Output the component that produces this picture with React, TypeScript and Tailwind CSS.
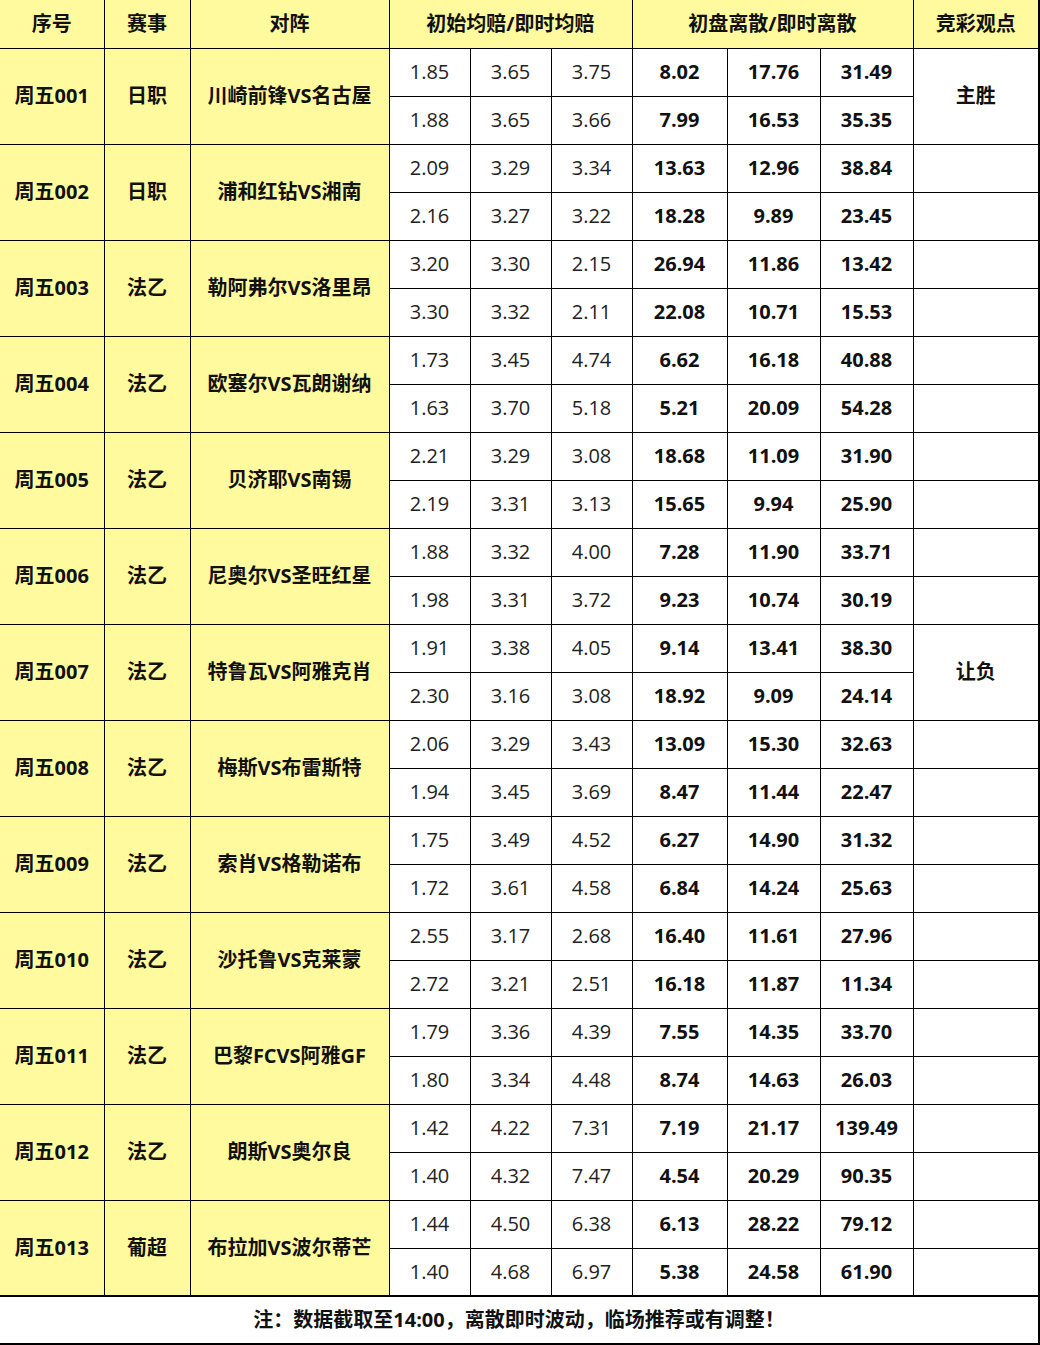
import React from 'react';

type Match = {
  no: string;
  league: string;
  teams: string;
  odds: [string[], string[]];
  disp: [string[], string[]];
  view?: string;
};

const matches: Match[] = [
  { no: '周五001', league: '日职', teams: '川崎前锋VS名古屋', odds: [['1.85', '3.65', '3.75'], ['1.88', '3.65', '3.66']], disp: [['8.02', '17.76', '31.49'], ['7.99', '16.53', '35.35']], view: '主胜' },
  { no: '周五002', league: '日职', teams: '浦和红钻VS湘南', odds: [['2.09', '3.29', '3.34'], ['2.16', '3.27', '3.22']], disp: [['13.63', '12.96', '38.84'], ['18.28', '9.89', '23.45']] },
  { no: '周五003', league: '法乙', teams: '勒阿弗尔VS洛里昂', odds: [['3.20', '3.30', '2.15'], ['3.30', '3.32', '2.11']], disp: [['26.94', '11.86', '13.42'], ['22.08', '10.71', '15.53']] },
  { no: '周五004', league: '法乙', teams: '欧塞尔VS瓦朗谢纳', odds: [['1.73', '3.45', '4.74'], ['1.63', '3.70', '5.18']], disp: [['6.62', '16.18', '40.88'], ['5.21', '20.09', '54.28']] },
  { no: '周五005', league: '法乙', teams: '贝济耶VS南锡', odds: [['2.21', '3.29', '3.08'], ['2.19', '3.31', '3.13']], disp: [['18.68', '11.09', '31.90'], ['15.65', '9.94', '25.90']] },
  { no: '周五006', league: '法乙', teams: '尼奥尔VS圣旺红星', odds: [['1.88', '3.32', '4.00'], ['1.98', '3.31', '3.72']], disp: [['7.28', '11.90', '33.71'], ['9.23', '10.74', '30.19']] },
  { no: '周五007', league: '法乙', teams: '特鲁瓦VS阿雅克肖', odds: [['1.91', '3.38', '4.05'], ['2.30', '3.16', '3.08']], disp: [['9.14', '13.41', '38.30'], ['18.92', '9.09', '24.14']], view: '让负' },
  { no: '周五008', league: '法乙', teams: '梅斯VS布雷斯特', odds: [['2.06', '3.29', '3.43'], ['1.94', '3.45', '3.69']], disp: [['13.09', '15.30', '32.63'], ['8.47', '11.44', '22.47']] },
  { no: '周五009', league: '法乙', teams: '索肖VS格勒诺布', odds: [['1.75', '3.49', '4.52'], ['1.72', '3.61', '4.58']], disp: [['6.27', '14.90', '31.32'], ['6.84', '14.24', '25.63']] },
  { no: '周五010', league: '法乙', teams: '沙托鲁VS克莱蒙', odds: [['2.55', '3.17', '2.68'], ['2.72', '3.21', '2.51']], disp: [['16.40', '11.61', '27.96'], ['16.18', '11.87', '11.34']] },
  { no: '周五011', league: '法乙', teams: '巴黎FCVS阿雅GF', odds: [['1.79', '3.36', '4.39'], ['1.80', '3.34', '4.48']], disp: [['7.55', '14.35', '33.70'], ['8.74', '14.63', '26.03']] },
  { no: '周五012', league: '法乙', teams: '朗斯VS奥尔良', odds: [['1.42', '4.22', '7.31'], ['1.40', '4.32', '7.47']], disp: [['7.19', '21.17', '139.49'], ['4.54', '20.29', '90.35']] },
  { no: '周五013', league: '葡超', teams: '布拉加VS波尔蒂芒', odds: [['1.44', '4.50', '6.38'], ['1.40', '4.68', '6.97']], disp: [['6.13', '28.22', '79.12'], ['5.38', '24.58', '61.90']] },
];

const cell = 'border border-black text-center align-middle p-0';
const yellow = 'bg-[#fffa9e] font-bold text-[20px] text-[#111]';

const App: React.FC = () => {
  return (
    <div
      className="w-[1040px] bg-white"
      style={{ fontFamily: '"Open Sans", "Noto Sans CJK SC", sans-serif' }}
    >
      <table className="w-[1039px] table-fixed border-collapse">
        <colgroup>
          <col className="w-[104px]" />
          <col className="w-[86px]" />
          <col className="w-[199px]" />
          <col className="w-[81px]" />
          <col className="w-[81px]" />
          <col className="w-[81px]" />
          <col className="w-[95px]" />
          <col className="w-[93px]" />
          <col className="w-[93px]" />
          <col className="w-[126px]" />
        </colgroup>
        <thead>
          <tr className="h-[48px]">
            <th className={`${cell} ${yellow} border-l-0 border-t-0`}>序号</th>
            <th className={`${cell} ${yellow} border-t-0`}>赛事</th>
            <th className={`${cell} ${yellow} border-t-0`}>对阵</th>
            <th colSpan={3} className={`${cell} ${yellow} border-t-0`}>初始均赔/即时均赔</th>
            <th colSpan={3} className={`${cell} ${yellow} border-t-0`}>初盘离散/即时离散</th>
            <th className={`${cell} ${yellow} border-t-0 border-r-2`}>竞彩观点</th>
          </tr>
        </thead>
        <tbody>
          {matches.map((m) =>
            [0, 1].map((i) => (
              <tr key={m.no + i} className="h-[48px]">
                {i === 0 && (
                  <>
                    <td rowSpan={2} className={`${cell} ${yellow} border-l-0`}>{m.no}</td>
                    <td rowSpan={2} className={`${cell} ${yellow}`}>{m.league}</td>
                    <td rowSpan={2} className={`${cell} ${yellow} whitespace-nowrap`}>{m.teams}</td>
                  </>
                )}
                {m.odds[i].map((o, k) => (
                  <td key={'o' + k} className={`${cell} text-[20px] text-[#222]`}>{o}</td>
                ))}
                {m.disp[i].map((d, k) => (
                  <td key={'d' + k} className={`${cell} text-[20px] font-bold text-[#111]`}>{d}</td>
                ))}
                {m.view ? (
                  i === 0 && (
                    <td rowSpan={2} className={`${cell} border-r-2 text-[20px] font-bold text-[#111]`}>{m.view}</td>
                  )
                ) : (
                  <td className={`${cell} border-r-2`}></td>
                )}
              </tr>
            ))
          )}
          <tr className="h-[48px]">
            <td
              colSpan={10}
              className={`${cell} border-l-0 border-t-2 border-b-2 border-r-2 text-[20px] font-bold text-[#111]`}
            >
              注：数据截取至14:00，离散即时波动，临场推荐或有调整！
            </td>
          </tr>
        </tbody>
      </table>
    </div>
  );
};

export default App;
